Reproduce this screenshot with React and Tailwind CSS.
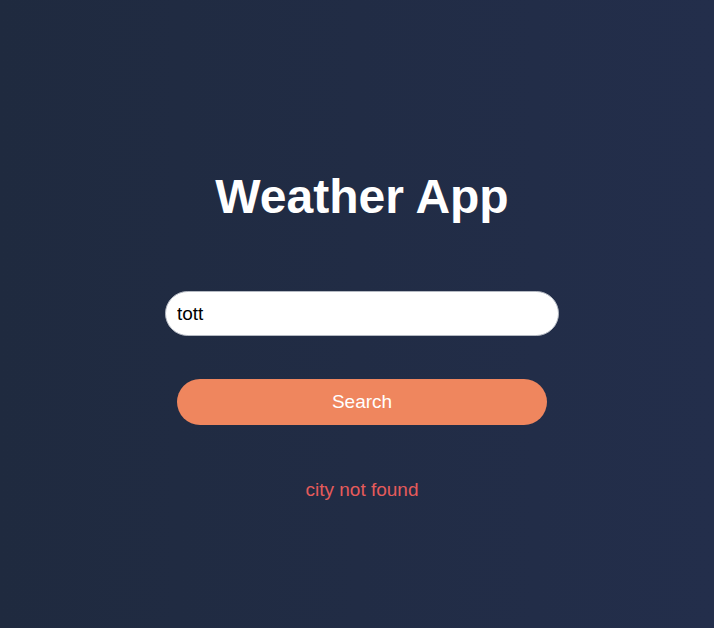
import React, { useState } from "react";

function App() {
  const [city, setCity] = useState("tott");
  const [error] = useState("city not found");

  return (
    <div
      className="w-full min-h-screen bg-linear-to-r from-[#1f2a3f] to-[#232e4b] flex flex-col items-center pl-[10px] pt-[169px]"
      style={{ fontFamily: '"Liberation Sans", Arial, sans-serif' }}
    >
      <h1 className="text-white text-[48px] leading-[56px] font-bold">
        Weather App
      </h1>
      <input
        type="text"
        value={city}
        onChange={(e) => setCity(e.target.value)}
        className="mt-[66px] w-[394px] h-[45px] rounded-full bg-white border border-[#b4b9c2] px-[11px] text-[19px] text-black outline-none"
      />
      <button className="mt-[43px] w-[370px] h-[46px] rounded-full bg-[#ef865e] text-white text-[19px]">
        Search
      </button>
      <p className="mt-[53px] text-[#e65b5b] text-[19px] leading-[24px]">
        {error}
      </p>
    </div>
  );
}

export default App;
